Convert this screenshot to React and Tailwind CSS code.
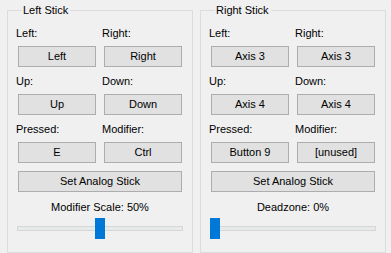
import React from "react";

const Btn = ({ children, wide }) => (
  <div
    className={`${wide ? "col-span-2 w-[164px]" : "w-[78px]"} ml-[2px] h-[21px] flex items-center justify-center border border-[#adadad] bg-[#e1e1e1] text-black`}
  >
    {children}
  </div>
);

const Label = ({ children }) => (
  <div className="h-[16px] leading-[16px] mb-[5px] text-black">{children}</div>
);

const Slider = ({ value }) => (
  <div className="relative ml-[1px] w-[166px] h-[21px] flex items-center">
    <div className="w-full h-[5px] border border-[#d6d6d6] bg-[#e7eaea]" />
    <div
      className="absolute top-0 w-[10px] h-[21px] bg-[#0078d7]"
      style={{ left: `${value * 156}px` }}
    />
  </div>
);

const StickGroup = ({ title, rows, caption, value }) => (
  <fieldset className="w-[186px] min-w-0 border border-[#dcdcdc] px-[8px] pb-[8px]">
    <legend className="ml-[6px] pl-[1px] pr-[2px] leading-[16px] text-black">{title}</legend>
    <div className="pt-[7px] grid grid-cols-[86px_82px]">
      {rows.map((r, i) => (
        <React.Fragment key={i}>
          <div className={i < rows.length - 1 ? "mb-[6px]" : ""}>
            <Label>{r[0]}</Label>
            <Btn>{r[1]}</Btn>
          </div>
          <div className={i < rows.length - 1 ? "mb-[6px]" : ""}>
            <Label>{r[2]}</Label>
            <Btn>{r[3]}</Btn>
          </div>
        </React.Fragment>
      ))}
      <div className="col-span-2 mt-[8px]">
        <Btn wide>Set Analog Stick</Btn>
      </div>
      <div className="col-span-2 mt-[7px] h-[16px] leading-[16px] text-center w-[168px] text-black">
        {caption}
      </div>
      <div className="col-span-2 mt-[3px]">
        <Slider value={value} />
      </div>
    </div>
  </fieldset>
);

export default function App() {
  return (
    <div
      className="w-[391px] h-[253px] bg-[#f0f0f0] pl-[7px] pt-[2px] flex gap-[7px] text-[11px] overflow-hidden"
      style={{ fontFamily: '"Liberation Sans", Arial, sans-serif' }}
    >
      <StickGroup
        title="Left Stick"
        rows={[
          ["Left:", "Left", "Right:", "Right"],
          ["Up:", "Up", "Down:", "Down"],
          ["Pressed:", "E", "Modifier:", "Ctrl"],
        ]}
        caption="Modifier Scale: 50%"
        value={0.5}
      />
      <StickGroup
        title="Right Stick"
        rows={[
          ["Left:", "Axis 3", "Right:", "Axis 3"],
          ["Up:", "Axis 4", "Down:", "Axis 4"],
          ["Pressed:", "Button 9", "Modifier:", "[unused]"],
        ]}
        caption="Deadzone: 0%"
        value={0}
      />
    </div>
  );
}
